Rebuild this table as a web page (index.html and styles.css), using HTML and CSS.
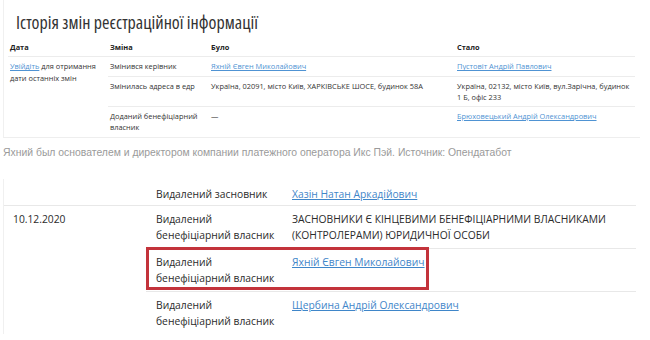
FILE: index.html
```html
<!DOCTYPE html>
<html lang="uk">
<head>
<meta charset="utf-8">
<title>Історія змін</title>
<link rel="stylesheet" href="styles.css">
</head>
<body>
<section class="card top">
  <h1 class="title">Історія змін реєстраційної інформації</h1>
  <div class="history">
    <div class="hrow head">
      <div class="c">Дата</div>
      <div class="c">Зміна</div>
      <div class="c">Було</div>
      <div class="c">Стало</div>
    </div>
    <div class="hbody">
      <div class="date-cell"><a href="#" class="link">Увійдіть</a> для отримання дати останніх змін</div>
      <div class="changes">
        <div class="crow">
          <div class="c">Змінився керівник</div>
          <div class="c"><a href="#" class="link">Яхній Євген Миколайович</a></div>
          <div class="c"><a href="#" class="link">Пустовіт Андрій Павлович</a></div>
        </div>
        <div class="crow">
          <div class="c">Змінилась адреса в едр</div>
          <div class="c">Україна, 02091, місто Київ, ХАРКІВСЬКЕ ШОСЕ, будинок 58А</div>
          <div class="c">Україна, 02132, місто Київ, вул.Зарічна, будинок 1&nbsp;Б, офіс 233</div>
        </div>
        <div class="crow">
          <div class="c">Доданий бенефіціарний власник</div>
          <div class="c">—</div>
          <div class="c"><a href="#" class="link">Брюховецький Андрій Олександрович</a></div>
        </div>
      </div>
    </div>
  </div>
</section>

<p class="caption">Яхний был основателем и директором компании платежного оператора Икс Пэй. Источник: Опендатабот</p>

<section class="card bottom">
  <div class="group first">
    <div class="gdate"></div>
    <div class="subs">
      <div class="sub">
        <div class="kind">Видалений засновник</div>
        <div class="val"><a href="#" class="link">Хазін Натан Аркадійович</a></div>
      </div>
    </div>
  </div>
  <div class="group">
    <div class="gdate">10.12.2020</div>
    <div class="subs">
      <div class="sub">
        <div class="kind">Видалений бенефіціарний власник</div>
        <div class="val">ЗАСНОВНИКИ Є КІНЦЕВИМИ БЕНЕФІЦІАРНИМИ ВЛАСНИКАМИ (КОНТРОЛЕРАМИ) ЮРИДИЧНОЇ ОСОБИ</div>
      </div>
      <div class="sub marked">
        <div class="kind">Видалений бенефіціарний власник</div>
        <div class="val"><a href="#" class="link">Яхній Євген Миколайович</a></div>
        <span class="highlight" aria-hidden="true"></span>
      </div>
      <div class="sub">
        <div class="kind">Видалений бенефіціарний власник</div>
        <div class="val"><a href="#" class="link">Щербина Андрій Олександрович</a></div>
      </div>
    </div>
  </div>
</section>
</body>
</html>
```

FILE: styles.css
```css
* { box-sizing: border-box; }
html, body { margin: 0; padding: 0; background: #fff; }
body {
  width: 650px;
  height: 340px;
  overflow: hidden;
  font-family: "Open Sans", "Noto Sans", sans-serif;
  color: #333;
}

.link { color: #3f86c9; text-decoration: underline; }
.top .link { color: #4f93d3; }

.card {
  margin-left: 3px;
  width: 637px;
  border-left: 1px solid #f0f0f0;
}

.top {
  padding: 10px 0 0 4px;
  border-bottom: 1px solid #eeeeee;
}

.title {
  margin: 0 0 0 8px;
  font-weight: 400;
  font-size: 18px;
  font-stretch: 75%;
  line-height: 24px;
  color: #333;
}

.history {
  margin-top: 4px;
  width: 627px;
  font-size: 7.4px;
  line-height: 11.3px;
}

.hrow {
  display: grid;
  grid-template-columns: 100px 101px 246px 180px;
}

.hrow .c { padding: 4px 2px 3px; }

.head {
  font-weight: 700;
  color: #222;
  border-bottom: 1px solid #ececec;
}

.hbody { display: flex; }

.date-cell {
  width: 100px;
  padding: 4px 2px 3px;
  flex: none;
}

.changes { width: 527px; }

.crow {
  display: grid;
  grid-template-columns: 101px 246px 180px;
  border-top: 1px solid #ececec;
}
.crow:first-child { border-top: 0; }
.crow .c { padding: 4px 2px 3px; }

.caption {
  margin: 8px 0 0 3px;
  font-family: "Liberation Sans", Arial, sans-serif;
  font-size: 10.4px;
  line-height: 14px;
  color: #9a9a9a;
}

.bottom {
  margin-top: 19px;
  font-size: 10.3px;
  line-height: 16px;
  color: #2b2b2b;
}

.group {
  display: flex;
  width: 632px;
  border-top: 1px solid #e8e8e8;
}
.group.first { border-top: 0; }
.group.first .sub { padding: 7px 0 3px; }

.gdate {
  width: 142px;
  flex: none;
  padding: 5px 0 0 9px;
}

.subs { flex: 1; }

.sub {
  position: relative;
  display: grid;
  grid-template-columns: 136px 1fr;
  border-top: 1px solid #e8e8e8;
  padding: 5px 0;
}
.sub:first-child { border-top: 0; }

.kind { padding-left: 10px; }
.val { padding-left: 10px; }

.highlight {
  position: absolute;
  left: 0;
  top: -2px;
  width: 283px;
  height: 43px;
  border: 3px solid #c3333b;
  pointer-events: none;
}
```
